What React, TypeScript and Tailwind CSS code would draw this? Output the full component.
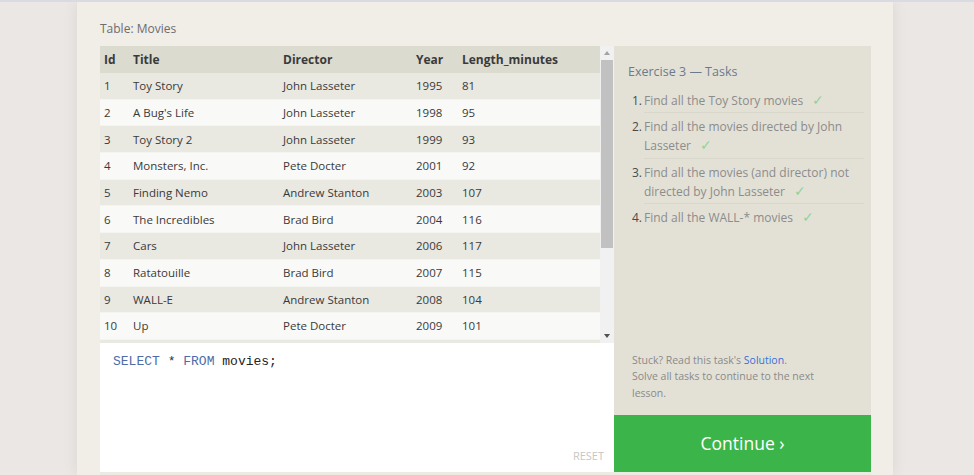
import React from 'react';

const movies = [
  [1, 'Toy Story', 'John Lasseter', 1995, 81],
  [2, "A Bug's Life", 'John Lasseter', 1998, 95],
  [3, 'Toy Story 2', 'John Lasseter', 1999, 93],
  [4, 'Monsters, Inc.', 'Pete Docter', 2001, 92],
  [5, 'Finding Nemo', 'Andrew Stanton', 2003, 107],
  [6, 'The Incredibles', 'Brad Bird', 2004, 116],
  [7, 'Cars', 'John Lasseter', 2006, 117],
  [8, 'Ratatouille', 'Brad Bird', 2007, 115],
  [9, 'WALL-E', 'Andrew Stanton', 2008, 104],
  [10, 'Up', 'Pete Docter', 2009, 101],
];

const tasks = [
  ['Find all the Toy Story movies'],
  ['Find all the movies directed by John', 'Lasseter'],
  ['Find all the movies (and director) not', 'directed by John Lasseter'],
  ['Find all the WALL-* movies'],
];

const Check = () => <span className="ml-[9px] text-[13.5px] leading-[0] text-[#8fd39a]">✓</span>;

const Row = ({ m, i }: { m: (string | number)[]; i: number }) => (
  <div
    className={`flex h-[26.7px] items-center border-b border-[#f4f4f0] text-[11.5px] text-[#3a3a3a] ${
      i % 2 === 0 ? 'bg-[#e9e8e1]' : 'bg-[#f9f9f7]'
    }`}
  >
    <div className="w-[33px] pl-[4px]">{m[0]}</div>
    <div className="w-[150px]">{m[1]}</div>
    <div className="w-[133px]">{m[2]}</div>
    <div className="w-[46px]">{m[3]}</div>
    <div>{m[4]}</div>
  </div>
);

const Scrollbar = () => (
  <div className="flex w-[14px] flex-col items-center bg-[#f1f1f1]">
    <div className="flex h-[14px] items-center justify-center">
      <div className="h-0 w-0 border-x-[3.5px] border-b-[4px] border-x-transparent border-b-[#a3a3a3]" />
    </div>
    <div className="h-[188px] w-[12px] bg-[#c1c1c1]" />
    <div className="flex-1" />
    <div className="flex h-[14px] items-center justify-center">
      <div className="h-0 w-0 border-x-[3.5px] border-t-[4px] border-x-transparent border-t-[#505050]" />
    </div>
  </div>
);

export default function App() {
  return (
    <div
      className="flex h-[475px] w-[974px] overflow-hidden border-t-2 border-[#d8dce2] bg-[#ebe7e4]"
      style={{ fontFamily: '"Open Sans", sans-serif' }}
    >
      <div className="ml-[77px] w-[816px] bg-[#f0eee7] pl-[23px] shadow-[0_0_14px_rgba(0,0,0,0.08)]">
        <div className="flex h-[44px] items-center pt-[10px] text-[12px] text-[#6d6d6d]">Table: Movies</div>
        <div className="flex">
          <div className="flex w-[514px] flex-col">
            <div className="flex h-[297px]">
              <div className="flex-1 overflow-hidden bg-[#e9e8e1]">
                <div className="flex h-[27px] items-center bg-[#dcdbd0] text-[12px] font-bold text-[#3a3a3a]">
                  <div className="w-[33px] pl-[4px]">Id</div>
                  <div className="w-[150px]">Title</div>
                  <div className="w-[133px]">Director</div>
                  <div className="w-[46px]">Year</div>
                  <div>Length_minutes</div>
                </div>
                {movies.map((m, i) => (
                  <Row key={i} m={m} i={i} />
                ))}
              </div>
              <Scrollbar />
            </div>
            <div className="relative h-[129px] bg-white px-[13px] pt-[9px] font-['Liberation_Mono',monospace] text-[13px]">
              <span className="text-[#4d6ca8]">SELECT</span> <span className="text-[#333]">*</span>{' '}
              <span className="text-[#4d6ca8]">FROM</span> <span className="text-[#222]">movies;</span>
              <div
                className="absolute right-[10px] bottom-[8px] text-[11px] text-[#c8c6c2]"
                style={{ fontFamily: '"Open Sans", sans-serif' }}
              >
                RESET
              </div>
            </div>
          </div>
          <div className="flex w-[257px] flex-col">
            <div className="flex h-[369px] flex-col bg-[#e3e1d6] pl-[14px] pr-[7px]">
              <div className="pt-[17px] text-[12.5px] text-[#6b7a8e]">Exercise 3 — Tasks</div>
              <ol className="mt-[5px] text-[12px] text-[#8c8c8c]">
                {tasks.map((t, i) => (
                  <li key={i} className="flex">
                    <span className="box-content w-[12px] pt-[4px] pl-[2px] pr-[2px] text-right leading-[19px] text-[#4a4a4a]">
                      {i + 1}.
                    </span>
                    <div
                      className={`flex-1 pt-[4px] pb-[2.5px] leading-[19px] ${
                        i < tasks.length - 1 ? 'border-b border-[#d9d7cc]' : ''
                      }`}
                    >
                      {t.map((line, j) => (
                        <div key={j} className="whitespace-nowrap">
                          {line}
                          {j === t.length - 1 && <Check />}
                        </div>
                      ))}
                    </div>
                  </li>
                ))}
              </ol>
              <div className="mt-auto pb-[14px] pl-[4px] text-[10.5px] leading-[16.5px] text-[#8a8a8a]">
                <div>
                  Stuck? Read this task's <span className="text-[#3b6fd6]">Solution</span>.
                </div>
                <div>Solve all tasks to continue to the next</div>
                <div>lesson.</div>
              </div>
            </div>
            <div className="flex h-[57px] items-center justify-center bg-[#3bb54a] text-[17.5px] text-white">
              Continue ›
            </div>
          </div>
        </div>
        <div className="h-[4px] w-[771px] bg-[#ecebe3]" />
      </div>
    </div>
  );
}
